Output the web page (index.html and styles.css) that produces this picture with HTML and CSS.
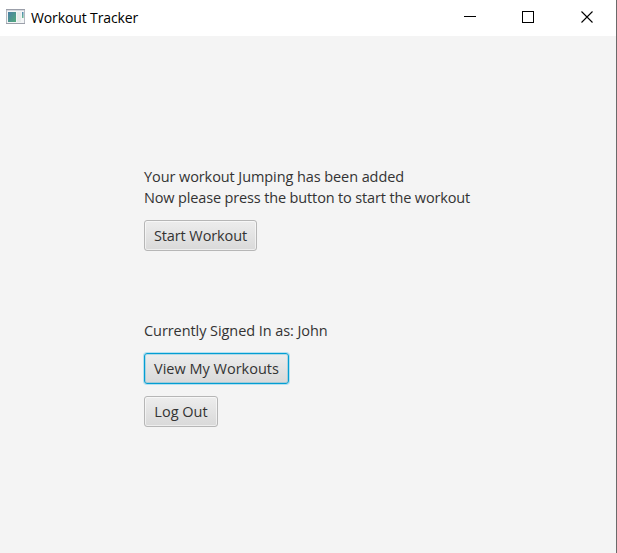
FILE: index.html
```html
<!DOCTYPE html>
<html lang="en">
<head>
<meta charset="utf-8">
<title>Workout Tracker</title>
<link rel="stylesheet" href="styles.css">
</head>
<body>
<div class="window">
  <header class="titlebar">
    <svg class="app-icon" width="19" height="15" viewBox="0 0 19 15">
      <defs>
        <linearGradient id="pane" x1="0" y1="0" x2="1" y2="1"><stop offset="0" stop-color="#4a7fa5"/><stop offset="1" stop-color="#52aa7c"/></linearGradient>
        <linearGradient id="bar" x1="0" y1="0" x2="0" y2="1"><stop offset="0" stop-color="#4d86b4"/><stop offset="1" stop-color="#66b98c"/></linearGradient>
      </defs>
      <rect x=".5" y=".5" width="18" height="14" fill="#f3f5f6" stroke="#b6bac2"/>
      <path d="M0 .5H19M0 14.5H19" stroke="#9b9fa9"/>
      <path d="M1 1.5H18" stroke="#d5d8df"/>
      <rect x="2" y="3" width="8" height="10" fill="url(#pane)"/>
      <rect x="11" y="3" width="4" height="10" fill="#e7ebea"/>
      <rect x="16" y="3" width="1.5" height="6" fill="url(#bar)"/>
    </svg>
    <h1 class="title">Workout Tracker</h1>
    <svg class="controls" width="130" height="12" viewBox="0 0 130 12" fill="none" stroke="#000" shape-rendering="crispEdges">
      <path d="M0 5.5H12"/>
      <rect x="58.5" y=".5" width="11" height="11"/>
      <path d="M117.5 .5L128.5 11.5M128.5 .5L117.5 11.5" shape-rendering="auto" stroke-width="1.1"/>
    </svg>
  </header>
  <main class="content">
    <p class="text added">Your workout Jumping has been added</p>
    <p class="text prompt">Now please press the button to start the workout</p>
    <button class="button start"><span>Start Workout</span></button>
    <p class="text user">Currently Signed In as: John</p>
    <button class="button view"><span>View My Workouts</span></button>
    <button class="button logout"><span>Log Out</span></button>
  </main>
</div>
</body>
</html>
```
FILE: styles.css
```css
* { box-sizing: border-box; }
body { margin: 0; overflow: hidden; font-family: "Open Sans", sans-serif; }
.window { width: 617px; height: 553px; background: #f4f4f4; border-right: 1px solid #6a6a6a; }
.titlebar { display: flex; height: 36px; background: #fff; padding: 0 0 0 6px; }
.app-icon { margin-top: 9px; }
.title { margin: 8px 0 0 6px; font-size: 14px; line-height: 20px; font-weight: 400; letter-spacing: -.12px; color: #000; white-space: nowrap; }
.controls { margin: 11px 22px 0 auto; }
.content { display: flex; flex-direction: column; align-items: flex-start; padding: 130px 0 0 144px; }
.text { margin: 0; font-size: 14.5px; line-height: 21px; color: #333; white-space: nowrap; }
.added { letter-spacing: -.085px; }
.prompt { letter-spacing: -.146px; }
.button { display: flex; justify-content: center; align-items: center; height: 31px; padding: 0; border: 1px solid #b6b6b6; border-radius: 3px; background: linear-gradient(#ededed, #d9d9d9); box-shadow: inset 0 0 0 1px rgba(255,255,255,.55); font: 14.5px/21px "Open Sans", sans-serif; color: #333; white-space: nowrap; }
.start { width: 113px; margin-top: 12px; letter-spacing: -.1px; }
.user { margin-top: 69px; letter-spacing: -.07px; }
.view { width: 145px; margin-top: 12px; border-color: #039ed3; box-shadow: 0 0 0 1px #b4e0f0, inset 0 0 0 1px rgba(3,158,211,.25); }
.logout { width: 74px; margin-top: 12px; }
```
